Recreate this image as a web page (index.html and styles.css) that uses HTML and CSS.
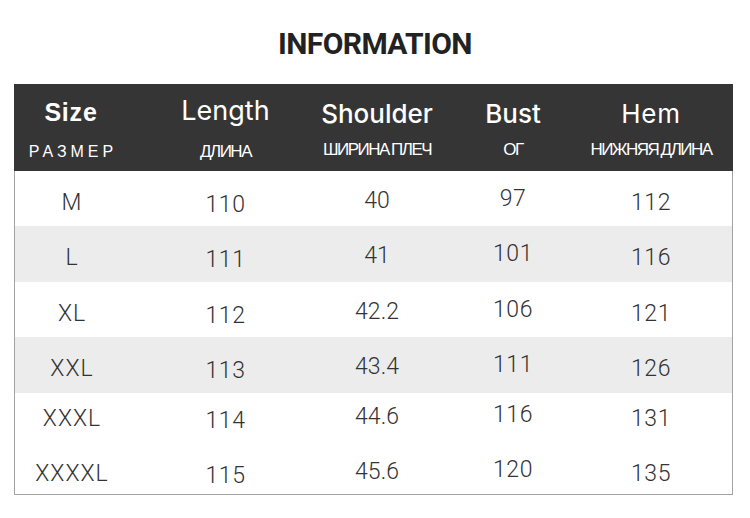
FILE: index.html
```html
<!DOCTYPE html>
<html lang="en">
<head>
<meta charset="utf-8">
<title>Information</title>
<link rel="stylesheet" href="styles.css">
</head>
<body>
<div class="page">
  <h1 class="title">INFORMATION</h1>
  <div class="table">
    <div class="thead">
      <div class="hcell c1"><span class="hmain m1">Size</span><span class="hsub s-spaced">РАЗМЕР</span></div>
      <div class="hcell c2"><span class="hmain m2">Length</span><span class="hsub s-low">ДЛИНА</span></div>
      <div class="hcell c3"><span class="hmain m3">Shoulder</span><span class="hsub">ШИРИНА ПЛЕЧ</span></div>
      <div class="hcell c4"><span class="hmain m4">Bust</span><span class="hsub">ОГ</span></div>
      <div class="hcell c5"><span class="hmain m5">Hem</span><span class="hsub">НИЖНЯЯ ДЛИНА</span></div>
    </div>
    <div class="tbody">
      <div class="row h55"><span class="cell d1">M</span><span class="cell d2">110</span><span class="cell d3">40</span><span class="cell d4">97</span><span class="cell d5">112</span></div>
      <div class="row h56 alt"><span class="cell d1">L</span><span class="cell d2">111</span><span class="cell d3">41</span><span class="cell d4">101</span><span class="cell d5">116</span></div>
      <div class="row h55"><span class="cell d1">XL</span><span class="cell d2">112</span><span class="cell d3">42.2</span><span class="cell d4">106</span><span class="cell d5">121</span></div>
      <div class="row h56 alt"><span class="cell d1">XXL</span><span class="cell d2">113</span><span class="cell d3">43.4</span><span class="cell d4">111</span><span class="cell d5">126</span></div>
      <div class="row h55 late"><span class="cell d1">XXXL</span><span class="cell d2">114</span><span class="cell d3">44.6</span><span class="cell d4">116</span><span class="cell d5">131</span></div>
      <div class="row h47 late"><span class="cell d1">XXXXL</span><span class="cell d2">115</span><span class="cell d3">45.6</span><span class="cell d4">120</span><span class="cell d5">135</span></div>
    </div>
  </div>
</div>
</body>
</html>
```
FILE: styles.css
```css
* { box-sizing: border-box; }
body { margin: 0; background: #fff; }

.page { width: 750px; padding-top: 26px; }

.title {
  margin: 0 0 22px 0;
  font-family: Roboto, "Liberation Sans", sans-serif;
  font-weight: 700;
  font-size: 30px;
  line-height: 36px;
  letter-spacing: -0.6px;
  text-align: center;
  color: #222;
}

.table { width: 719px; margin-left: 14px; }

.thead, .row {
  display: grid;
  grid-template-columns: 112px 197px 106px 166px 110px;
}

.thead {
  background: #353535;
  height: 87px;
  padding-left: 1px;
  color: #fff;
}

.hcell {
  display: flex;
  flex-direction: column;
  align-items: center;
  min-width: 0;
}

.hmain {
  display: block;
  height: 46px;
  line-height: 30px;
  white-space: nowrap;
  font-family: Inter, "Open Sans", sans-serif;
  font-weight: 400;
  font-size: 26px;
}
.m1 { font-family: "Liberation Sans", Arial, sans-serif; font-weight: 700; font-size: 25px; letter-spacing: 0.8px; padding-top: 13px; }
.m2 { font-size: 27px; padding-top: 12px; }
.m3 { font-weight: 500; padding-top: 15px; }
.m4 { font-weight: 500; padding-top: 15px; }
.m5 { padding-top: 15px; letter-spacing: 0.8px; }

.hsub {
  display: block;
  line-height: 20px;
  padding-top: 10px;
  white-space: nowrap;
  font-family: "Liberation Sans", Arial, sans-serif;
  font-size: 17px;
  letter-spacing: -1.5px;
  word-spacing: -1px;
}
.s-low { padding-top: 12px; }
.s-spaced { padding-top: 12px; letter-spacing: 4px; padding-left: 4px; font-size: 16px; }

.tbody {
  border-left: 1px solid #a3a3a3;
  border-right: 1px solid #a3a3a3;
  border-bottom: 1px solid #a3a3a3;
}

.row { --pt: 18px; }
.row.late { --pt: 12px; }
.h55 { height: 55px; }
.h56 { height: 56px; }
.h47 { height: 46px; }
.alt { background: #ececec; }

.cell {
  display: flex;
  justify-content: center;
  line-height: 24px;
  white-space: nowrap;
  font-family: Roboto, "Liberation Sans", sans-serif;
  font-weight: 300;
  font-size: 23px;
  color: #333;
}
.d1 { padding-top: calc(var(--pt) + 2px); letter-spacing: 1px; padding-left: 2px; }
.d2 { padding-top: calc(var(--pt) + 4px); letter-spacing: 0.6px; }
.d3 { padding-top: calc(var(--pt) + 0px); }
.d4 { padding-top: calc(var(--pt) - 2px); letter-spacing: 0.6px; }
.d5 { padding-top: calc(var(--pt) + 2px); letter-spacing: 0.6px; }
```
